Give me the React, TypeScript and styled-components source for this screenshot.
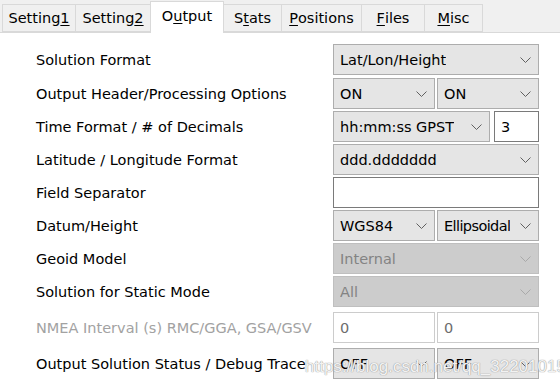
import styled, { createGlobalStyle } from "styled-components";

const GlobalStyle = createGlobalStyle`
  body {
    margin: 0;
    background: #ffffff;
    font-family: "DejaVu Sans", "Liberation Sans", sans-serif;
  }
`;

type Tab = { pre: string; key: string; post: string; width: number; active?: boolean };

const tabs: Tab[] = [
  { pre: "Setting", key: "1", post: "", width: 74 },
  { pre: "Setting", key: "2", post: "", width: 76 },
  { pre: "O", key: "u", post: "tput", width: 74, active: true },
  { pre: "S", key: "t", post: "ats", width: 59 },
  { pre: "", key: "P", post: "ositions", width: 81 },
  { pre: "", key: "F", post: "iles", width: 64 },
  { pre: "", key: "M", post: "isc", width: 59 },
];

export default function App() {
  return (
    <Window>
      <GlobalStyle />

      {/* tab strip */}
      <TabStrip>
        {tabs.map((t) => (
          <TabButton key={t.pre + t.key} $active={t.active} $width={t.width}>
            {t.pre}
            <u>{t.key}</u>
            {t.post}
          </TabButton>
        ))}
      </TabStrip>

      {/* output options */}
      <Form>
        <Row>
          <Label>Solution Format</Label>
          <Controls>
            <Combo value="Lat/Lon/Height" />
          </Controls>
        </Row>
        <Row $top={3}>
          <Label>Output Header/Processing Options</Label>
          <Controls $split>
            <Combo value="ON" />
            <Combo value="ON" />
          </Controls>
        </Row>
        <Row>
          <Label>Time Format / # of Decimals</Label>
          <Controls $cols="157px 45px" $gap={4}>
            <Combo value="hh:mm:ss GPST" />
            <Edit>3</Edit>
          </Controls>
        </Row>
        <Row>
          <Label>Latitude / Longitude Format</Label>
          <Controls>
            <Combo value="ddd.ddddddd" />
          </Controls>
        </Row>
        <Row>
          <Label>Field Separator</Label>
          <Controls>
            <Edit />
          </Controls>
        </Row>
        <Row>
          <Label>Datum/Height</Label>
          <Controls $split>
            <Combo value="WGS84" />
            <Combo value="Ellipsoidal" tight />
          </Controls>
        </Row>
        <Row>
          <Label>Geoid Model</Label>
          <Controls>
            <Combo value="Internal" disabled />
          </Controls>
        </Row>
        <Row>
          <Label>Solution for Static Mode</Label>
          <Controls>
            <Combo value="All" disabled />
          </Controls>
        </Row>
        <Row $top={5}>
          <Label $disabled>NMEA Interval (s) RMC/GGA, GSA/GSV</Label>
          <Controls $split>
            <Edit $disabled>0</Edit>
            <Edit $disabled>0</Edit>
          </Controls>
        </Row>
        <Row $top={5}>
          <Label>Output Solution Status / Debug Trace</Label>
          <Controls $split>
            <Combo value="OFF" />
            <Combo value="OFF" />
          </Controls>
        </Row>
      </Form>

      <Watermark>https://blog.csdn.net/qq_32201015</Watermark>
    </Window>
  );
}

function Combo({ value, disabled, tight }: { value: string; disabled?: boolean; tight?: boolean }) {
  return (
    <ComboBox $disabled={disabled} $tight={tight}>
      <span>{value}</span>
      <svg width="11" height="6" viewBox="0 0 11 6">
        <path d="M0.5 0.5 L5.5 5.5 L10.5 0.5" fill="none" stroke="currentColor" strokeWidth="1" />
      </svg>
    </ComboBox>
  );
}

const Window = styled.div`
  position: relative;
  width: 560px;
  height: 388px;
  overflow: hidden;
  background: #ffffff;
  font-family: "DejaVu Sans", "Liberation Sans", sans-serif;
  font-size: 14.5px;
  color: #000000;
`;

const TabStrip = styled.div`
  display: flex;
  align-items: flex-end;
  height: 32px;
  padding-left: 3px;
  background: #f0f0f0;
  border-bottom: 1px solid #d9d9d9;
`;

const TabButton = styled.div<{ $active?: boolean; $width: number }>`
  display: flex;
  align-items: center;
  justify-content: center;
  box-sizing: border-box;
  flex: none;
  width: ${(p) => p.$width}px;
  height: ${(p) => (p.$active ? "32px" : "28px")};
  margin-bottom: ${(p) => (p.$active ? "-1px" : "0")};
  padding-bottom: ${(p) => (p.$active ? "4px" : "0")};
  background: ${(p) => (p.$active ? "#ffffff" : "#f0f0f0")};
  border: 1px solid #d9d9d9;
  border-bottom: ${(p) => (p.$active ? "none" : "1px solid #d9d9d9")};
  margin-left: -1px;
  white-space: nowrap;

  u {
    text-underline-offset: 2px;
  }
`;

const Form = styled.div`
  display: flex;
  flex-direction: column;
  padding: 11px 0 0 36px;
`;

const Row = styled.div<{ $top?: number }>`
  display: grid;
  grid-template-columns: 297px 206px;
  align-items: center;
  height: 31px;
  margin-top: ${(p) => p.$top ?? 2}px;

  &:first-child {
    margin-top: 0;
  }
`;

const Label = styled.div<{ $disabled?: boolean }>`
  white-space: nowrap;
  color: ${(p) => (p.$disabled ? "#a2a2a2" : "#000000")};
`;

const Controls = styled.div<{ $split?: boolean; $cols?: string; $gap?: number }>`
  display: grid;
  grid-template-columns: ${(p) => p.$cols ?? (p.$split ? "1fr 1fr" : "1fr")};
  column-gap: ${(p) => p.$gap ?? 2}px;
  height: 31px;
`;

const ComboBox = styled.div<{ $disabled?: boolean; $tight?: boolean }>`
  display: flex;
  align-items: center;
  justify-content: space-between;
  box-sizing: border-box;
  height: 31px;
  padding: 0 7px 0 6px;
  background: ${(p) => (p.$disabled ? "#cccccc" : "#e5e5e5")};
  border: 1px solid ${(p) => (p.$disabled ? "#bfbfbf" : "#adadad")};
  color: ${(p) => (p.$disabled ? "#838383" : "#000000")};
  white-space: nowrap;
  overflow: hidden;

  span {
    overflow: hidden;
    letter-spacing: ${(p) => (p.$tight ? "-0.6px" : "normal")};
  }

  svg {
    flex: none;
    margin-left: 4px;
    color: ${(p) => (p.$disabled ? "#a9a9a9" : "#606060")};
  }
`;

const Edit = styled.div<{ $disabled?: boolean }>`
  display: flex;
  align-items: center;
  box-sizing: border-box;
  height: 31px;
  padding: 0 6px;
  background: #ffffff;
  border: 1px solid ${(p) => (p.$disabled ? "#cccccc" : "#7a7a7a")};
  color: ${(p) => (p.$disabled ? "#6d6d6d" : "#000000")};
`;

const Watermark = styled.div`
  position: absolute;
  left: 305px;
  top: 357px;
  font-family: "Liberation Sans", Arial, sans-serif;
  font-size: 17px;
  color: rgba(255, 255, 255, 0.9);
  text-shadow: 0 0 1px #9a9a9a, 0 0 1px #9a9a9a;
  white-space: nowrap;
  pointer-events: none;
`;
